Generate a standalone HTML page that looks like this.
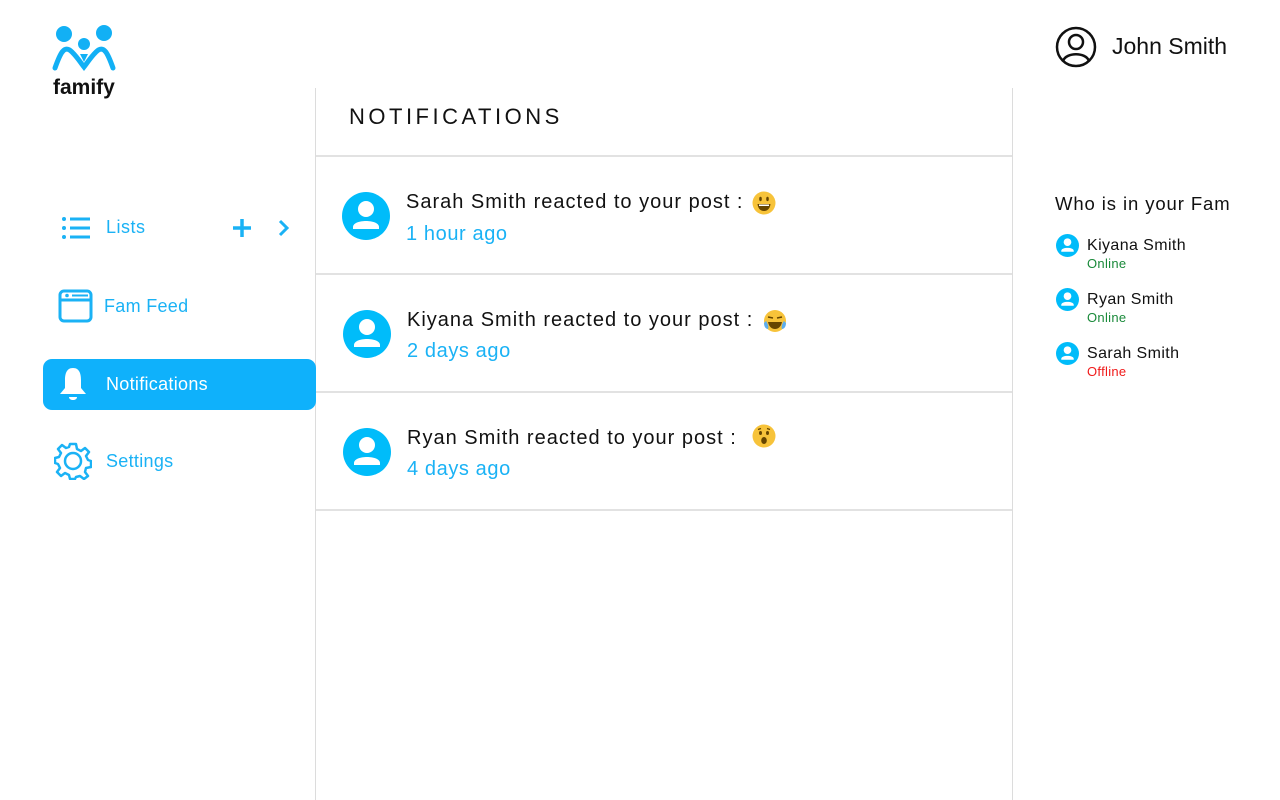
<!DOCTYPE html>
<html><head><meta charset="utf-8"><style>
*{margin:0;padding:0;box-sizing:border-box}
body{width:1280px;height:800px;background:#fff;position:relative;overflow:hidden;font-family:"Liberation Sans",sans-serif;color:#111}
.a{position:absolute;white-space:nowrap}
.blue{color:#1ab2f5}
.vl{position:absolute;width:1px;background:#dcdcdc;top:88px;height:712px}
.hl{position:absolute;height:2px;background:#e2e2e2;left:316px;width:696px}
.nt{font-size:20px;letter-spacing:1px;line-height:24px}
.tm{font-size:20px;letter-spacing:0.6px;color:#1ab2f5;line-height:24px}
.fm{font-size:16px;letter-spacing:0.4px;line-height:18px}
.st{font-size:13px;letter-spacing:0.3px;line-height:14px}
</style></head><body>
<svg class="a" style="left:50px;top:24px" width="68" height="50" viewBox="0 0 68 50">
<circle cx="14" cy="10" r="8" fill="#12b0f5"/><circle cx="54" cy="9" r="8" fill="#12b0f5"/><circle cx="34" cy="20" r="6" fill="#12b0f5"/>
<path d="M5 44 C10 30 14 20 22 28 C28 34 30 38 34 43 C38 38 40 34 46 28 C54 20 58 30 63 44" fill="none" stroke="#12b0f5" stroke-width="5" stroke-linecap="round"/>
<path d="M30 30 L34 38 L38 30 Z" fill="#12b0f5"/>
</svg>
<div class="a" style="left:53px;top:76px;font-size:21px;font-weight:bold;color:#111">famify</div>

<svg class="a" style="left:1055px;top:26px" width="42" height="42" viewBox="0 0 42 42"><circle cx="21" cy="21" r="19" fill="none" stroke="#111" stroke-width="2.5"/><circle cx="21" cy="16" r="7" fill="none" stroke="#111" stroke-width="2.5"/><path d="M8 35 C11 26 31 26 34 35" fill="none" stroke="#111" stroke-width="2.5"/></svg>
<div class="a" style="left:1112px;top:33px;font-size:23px;letter-spacing:0px">John Smith</div>

<div class="vl" style="left:315px"></div>
<div class="vl" style="left:1012px"></div>

<svg class="a" style="left:61px;top:216px" width="30" height="24" viewBox="0 0 30 24"><g fill="#1ab2f5"><circle cx="3" cy="3" r="2"/><circle cx="3" cy="12" r="2"/><circle cx="3" cy="21" r="2"/><rect x="9" y="1.5" width="20" height="3"/><rect x="9" y="10.5" width="20" height="3"/><rect x="9" y="19.5" width="20" height="3"/></g></svg>
<div class="a blue" style="left:106px;top:217px;font-size:18px;letter-spacing:0.5px">Lists</div>
<svg class="a" style="left:231px;top:217px" width="22" height="22"><path d="M11 2V20M2 11H20" stroke="#1ab2f5" stroke-width="3.5"/></svg>
<svg class="a" style="left:277px;top:219px" width="14" height="18"><path d="M3 2L10 9L3 16" fill="none" stroke="#1ab2f5" stroke-width="3"/></svg>

<svg class="a" style="left:58px;top:289px" width="35" height="34" viewBox="0 0 35 34"><rect x="2" y="2" width="31" height="30" rx="4" fill="none" stroke="#1ab2f5" stroke-width="3"/><path d="M2 11H33" stroke="#1ab2f5" stroke-width="3"/><circle cx="9" cy="6.5" r="1.8" fill="#1ab2f5"/><rect x="14" y="5.5" width="16" height="2" fill="#1ab2f5"/></svg>
<div class="a blue" style="left:104px;top:296px;font-size:18px;letter-spacing:0.3px">Fam Feed</div>

<div class="a" style="left:43px;top:359px;width:273px;height:51px;background:#0fb1fb;border-radius:9px"></div>
<svg class="a" style="left:57px;top:366px" width="32" height="36" viewBox="0 0 32 36"><path d="M16 2C9 2 8 9 8 14V22L3 28H29L24 22V14C24 9 23 2 16 2Z" fill="#fff"/><path d="M12 31H20C20 35 12 35 12 31Z" fill="#fff"/></svg>
<div class="a" style="left:106px;top:374px;font-size:18px;letter-spacing:0.3px;color:#fff">Notifications</div>

<svg class="a" style="left:54px;top:442px" width="38" height="38" viewBox="0 0 38 38"><path d="M16 2H22L23 7L27 9L31 6L35 10L32 14L34 18L37 19V25L32 26L31 30L34 34L30 37L26 34L22 35L21 37H16L15 33L11 31L7 34L3 30L6 26L4 22L1 21V16L5 15L7 11L4 7L8 3L12 6L15 5Z" fill="none" stroke="#1ab2f5" stroke-width="2.5" stroke-linejoin="round"/><circle cx="19" cy="19" r="8" fill="none" stroke="#1ab2f5" stroke-width="2.5"/></svg>
<div class="a blue" style="left:106px;top:451px;font-size:18px;letter-spacing:0.3px">Settings</div>

<div class="a" style="left:349px;top:104px;font-size:22px;letter-spacing:3.5px">NOTIFICATIONS</div>
<div class="hl" style="top:155px"></div>
<div class="hl" style="top:273px"></div>
<div class="hl" style="top:391px"></div>
<div class="hl" style="top:509px"></div>

<svg width="0" height="0" style="position:absolute"><defs><symbol id="av" viewBox="0 0 48 48"><circle cx="24" cy="24" r="24" fill="#00bcfa"/><circle cx="24" cy="17" r="8" fill="#fff"/><path d="M11 35C11 27 37 27 37 35V37H11Z" fill="#fff"/></symbol></defs></svg>

<svg class="a" style="left:342px;top:192px" width="48" height="48"><use href="#av"/></svg>
<div class="a nt" style="left:406px;top:190px">Sarah Smith reacted to your post :</div>
<svg class="a" style="left:752px;top:191px" width="24" height="24" viewBox="0 0 24 24"><circle cx="12" cy="12" r="11.5" fill="#f7c33a"/><ellipse cx="8.5" cy="8" rx="1.3" ry="2.2" fill="#664500"/><ellipse cx="15.5" cy="8" rx="1.3" ry="2.2" fill="#664500"/><path d="M5.5 13H18.5C18 18 15 20 12 20C9 20 6 18 5.5 13Z" fill="#664500"/><path d="M7 13.5H17V15H7Z" fill="#fff"/></svg>
<div class="a tm" style="left:406px;top:222px">1 hour ago</div>

<svg class="a" style="left:343px;top:310px" width="48" height="48"><use href="#av"/></svg>
<div class="a nt" style="left:407px;top:308px">Kiyana Smith reacted to your post :</div>
<svg class="a" style="left:763px;top:309px" width="24" height="24" viewBox="0 0 24 24"><circle cx="12" cy="12" r="11" fill="#f7c33a"/><path d="M5 8L10 9M19 8L14 9" stroke="#664500" stroke-width="1.5"/><path d="M5 13H19C18 18 15 20 12 20C9 20 6 18 5 13Z" fill="#664500"/><path d="M1 14C1 18 3 20 5 20C6 18 5 15 3 12Z M23 14C23 18 21 20 19 20C18 18 19 15 21 12Z" fill="#5dadec"/></svg>
<div class="a tm" style="left:407px;top:339px">2 days ago</div>

<svg class="a" style="left:343px;top:428px" width="48" height="48"><use href="#av"/></svg>
<div class="a nt" style="left:407px;top:426px">Ryan Smith reacted to your post :</div>
<svg class="a" style="left:752px;top:424px" width="24" height="24" viewBox="0 0 24 24"><circle cx="12" cy="12" r="11.5" fill="#f7c33a"/><ellipse cx="8.5" cy="9" rx="1.5" ry="2" fill="#664500"/><ellipse cx="15.5" cy="9" rx="1.5" ry="2" fill="#664500"/><path d="M6 5.5L9 4.5M18 5.5L15 4.5" stroke="#664500" stroke-width="1.2"/><ellipse cx="12" cy="16.5" rx="2.8" ry="3.5" fill="#664500"/></svg>
<div class="a tm" style="left:407px;top:457px">4 days ago</div>

<div class="a" style="left:1055px;top:193px;font-size:18.5px;letter-spacing:0.9px">Who is in your Fam</div>
<svg class="a" style="left:1056px;top:234px" width="23" height="23"><use href="#av"/></svg>
<div class="a fm" style="left:1087px;top:237px">Kiyana Smith</div>
<div class="a st" style="left:1087px;top:257px;color:#1a8a3a">Online</div>
<svg class="a" style="left:1056px;top:288px" width="23" height="23"><use href="#av"/></svg>
<div class="a fm" style="left:1087px;top:291px">Ryan Smith</div>
<div class="a st" style="left:1087px;top:311px;color:#1a8a3a">Online</div>
<svg class="a" style="left:1056px;top:342px" width="23" height="23"><use href="#av"/></svg>
<div class="a fm" style="left:1087px;top:345px">Sarah Smith</div>
<div class="a st" style="left:1087px;top:365px;color:#f01a1a">Offline</div>
</body></html>
